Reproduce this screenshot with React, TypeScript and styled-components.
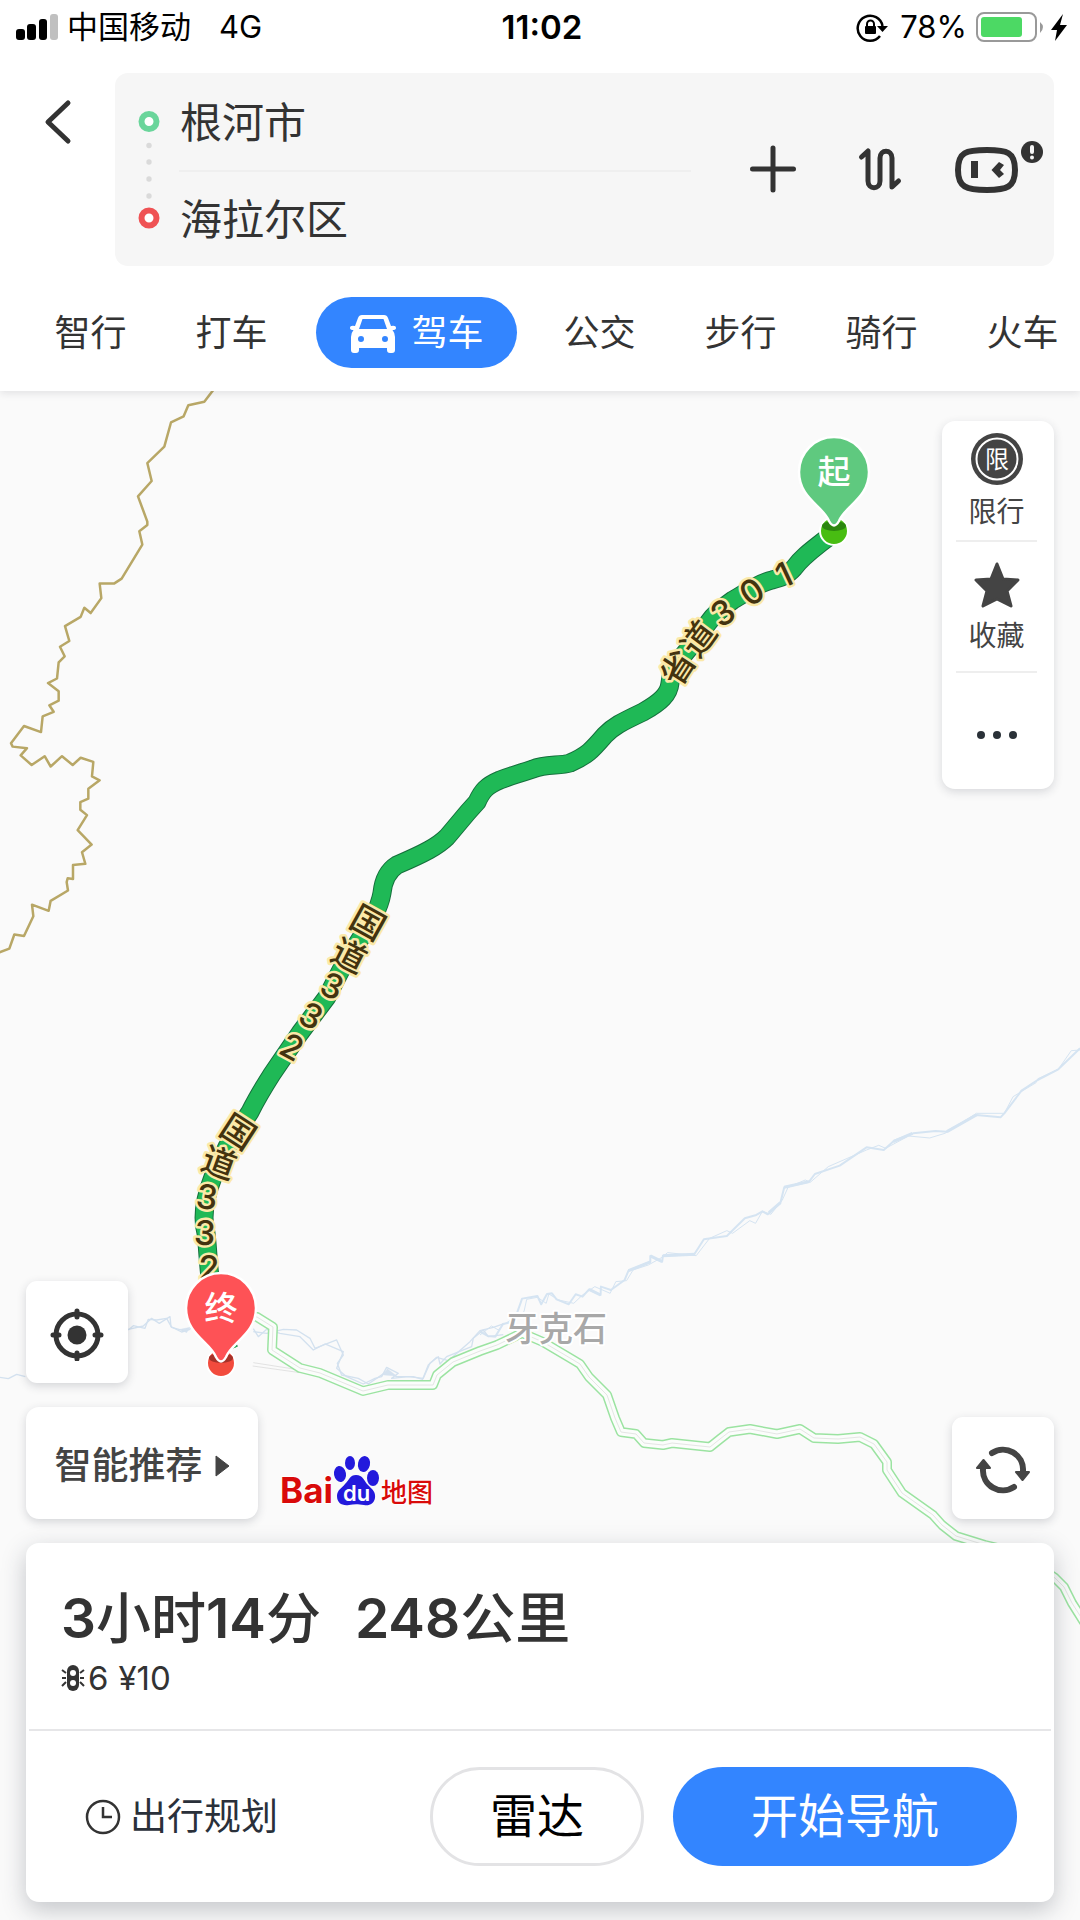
import React from "react";
import styled, { createGlobalStyle } from "styled-components";

const GlobalStyle = createGlobalStyle`
  * { box-sizing: border-box; }
  body {
    margin: 0;
    background: #fafafa;
    color: #333;
    font-family: Inter, "Noto Sans CJK SC", sans-serif;
    line-height: 1.2;
  }
  button, input { font: inherit; color: inherit; }
  svg { display: block; flex: none; }
`;

const Page = styled.div`
  display: flex;
  flex-direction: column;
  min-height: 100vh;
`;

const Header = styled.header`
  position: relative;
  z-index: 1;
  background: #fff;
  box-shadow: 0 2px 8px rgba(40, 45, 60, 0.12);
`;

const StatusBar = styled.div`
  display: grid;
  grid-template-columns: 1fr auto 1fr;
  align-items: center;
  height: 54px;
  padding: 0 12px 0 16px;
  color: #000;
  font-size: 31px;
  line-height: 36px;
`;

const StatusGroup = styled.div<{ $end?: boolean }>`
  display: flex;
  align-items: center;
  justify-content: ${(p) => (p.$end ? "flex-end" : "flex-start")};
  gap: 8px;
`;

const Network = styled.span`
  margin-left: 20px;
`;

const Clock = styled.time`
  font-size: 33px;
  font-weight: 600;
`;

const SearchRow = styled.div`
  display: flex;
  align-items: flex-start;
  padding: 19px 26px 0 0;
`;

const BackButton = styled.button`
  display: flex;
  justify-content: center;
  flex: none;
  width: 115px;
  padding: 24px 0;
  border: 0;
  background: none;
`;

const SearchBox = styled.div`
  display: flex;
  align-items: center;
  flex: 1;
  min-width: 0;
  height: 193px;
  padding: 0 10px 0 22px;
  border-radius: 13px;
  background: #f6f6f6;
`;

const Fields = styled.div`
  flex: 1;
  min-width: 0;
  margin: 0 52px 0 18px;
`;

const Field = styled.input`
  display: block;
  width: 100%;
  height: 96px;
  padding: 0 1px 4px;
  border: 0;
  background: none;
  font-size: 42px;
  outline: none;

  & + & { border-top: 2px solid #efefef; }
`;

const BoxActions = styled.div`
  display: flex;
  gap: 46px;
`;

const IconButton = styled.button`
  padding: 0;
  border: 0;
  background: none;
`;

const Tabs = styled.nav`
  display: flex;
  align-items: center;
  height: 125px;
  padding: 8px 0 0 20px;
  overflow: hidden;
`;

const Tab = styled.button<{ $active?: boolean }>`
  display: flex;
  align-items: center;
  justify-content: center;
  gap: 14px;
  flex: none;
  width: ${(p) => (p.$active ? "201px" : "141px")};
  height: 71px;
  margin: ${(p) => (p.$active ? "0 12px 0 14px" : "0")};
  padding: 2px 0 0;
  border: 0;
  border-radius: 36px;
  background: ${(p) => (p.$active ? "#3385ff" : "none")};
  color: ${(p) => (p.$active ? "#fff" : "#333")};
  font-size: 36px;
`;

const MapArea = styled.main`
  position: relative;
  display: flex;
  flex: 1;
  flex-direction: column;
  justify-content: space-between;
  padding: 30px 26px 18px;
  background: #fafafa;
`;

const MapCanvas = styled.svg`
  position: absolute;
  inset: 0;
  width: 100%;
  height: 100%;
`;

const Panel = styled.div`
  position: relative;
  align-self: flex-end;
  width: 112px;
  padding: 11px 17px 0 14px;
  border-radius: 13px;
  background: #fff;
  box-shadow: 0 3px 10px rgba(40, 45, 60, 0.16);
`;

const PanelButton = styled.button<{ $height: number }>`
  display: flex;
  flex-direction: column;
  align-items: center;
  gap: 8px;
  width: 100%;
  height: ${(p) => p.$height}px;
  padding: 0;
  border: 0;
  background: none;
  color: #444;
  font-size: 28px;
  line-height: 36px;

  & + & {
    justify-content: center;
    border-top: 2px solid #eee;
  }
`;

const BottomStack = styled.div`
  position: relative;
  display: flex;
  flex-direction: column;
  gap: 24px;
`;

const FloatButton = styled.button`
  display: flex;
  align-items: center;
  justify-content: center;
  width: 102px;
  height: 102px;
  padding: 3px 0 0;
  border: 0;
  border-radius: 11px;
  background: #fff;
  box-shadow: 0 3px 10px rgba(40, 45, 60, 0.18);
`;

const ToolRow = styled.div`
  display: flex;
  align-items: flex-end;
  gap: 20px;
`;

const SmartButton = styled(FloatButton)`
  gap: 12px;
  width: 232px;
  height: 112px;
  padding-top: 6px;
  border-radius: 13px;
  color: #444;
  font-size: 37px;
  font-weight: 500;
`;

const Logo = styled.svg`
  margin-bottom: 4px;
`;

const RefreshButton = styled(FloatButton)`
  margin-left: auto;
`;

const Card = styled.section`
  border-radius: 13px;
  background: #fff;
  box-shadow: 0 8px 24px rgba(40, 45, 60, 0.26);
`;

const Summary = styled.div`
  height: 188px;
  margin: 0 3px;
  padding: 43px 31px 0 32px;
  border-bottom: 2px solid #e6e6e8;
`;

const Headline = styled.h1`
  display: flex;
  gap: 34px;
  margin: 0;
  font-size: 55px;
  font-weight: 500;
  line-height: 64px;
`;

const Figure = styled.span`
  font-weight: 600;
`;

const Details = styled.p`
  display: flex;
  align-items: center;
  gap: 10px;
  margin: 8px 0 0;
  font-size: 33px;
  line-height: 40px;
`;

const Detail = styled.span`
  display: flex;
  align-items: center;
  gap: 3px;
`;

const Actions = styled.div`
  display: flex;
  align-items: center;
  height: 171px;
  padding: 0 37px 0 59px;
`;

const PlanButton = styled.button`
  display: flex;
  align-items: center;
  gap: 9px;
  margin-right: auto;
  padding: 2px 0 0;
  border: 0;
  background: none;
  color: #2a303a;
  font-size: 37px;
`;

const PillButton = styled.button<{ $primary?: boolean }>`
  width: ${(p) => (p.$primary ? "344px" : "214px")};
  height: 99px;
  margin-left: ${(p) => (p.$primary ? "29px" : "0")};
  padding: 0;
  border: ${(p) => (p.$primary ? "0" : "3px solid #e3e3e5")};
  border-radius: 50px;
  background: ${(p) => (p.$primary ? "#3385ff" : "#fff")};
  color: ${(p) => (p.$primary ? "#fff" : "#000")};
  font-size: 47px;
`;

const RoadGlyph = styled.text`
  fill: #43330f;
  stroke: #fbe9a8;
  stroke-width: 5px;
  stroke-linejoin: round;
  paint-order: stroke;
  font-size: 34px;
  font-weight: 500;
  text-anchor: middle;
`;

const PlaceName = styled.text`
  fill: #a8a8a8;
  stroke: #fff;
  stroke-width: 4px;
  stroke-linejoin: round;
  paint-order: stroke;
  font-size: 34px;
  font-weight: 500;
`;

const PinText = styled.text`
  fill: #fff;
  font-size: 33px;
  font-weight: 500;
  text-anchor: middle;
`;

const BORDER =
  "640,26 613,57 565,66 551,95 513,111 493,174 442,217 455,264 414,304 442,370 442,379 418,395 427,430 365,519 342,532 299,532 304,570 272,609 253,595 242,619 195,643 208,682 180,697 194,722 176,738 171,780 144,792 176,813 176,838 148,850 161,867 128,879 123,920 72,904 33,949 38,958 81,962 62,981 95,1006 134,983 152,1010 186,983 218,1006 242,987 280,998 276,1036 299,1046 265,1068 265,1094 241,1103 241,1123 261,1137 233,1176 275,1214 246,1234 256,1264 219,1267 219,1304 203,1302 200,1312 204,1334 152,1361 146,1387 96,1371 100,1401 72,1453 43,1449 28,1486 -3,1496";

const RIVER_EAST =
  "1568,85 1511,148 1457,180 1415,212 1370,280 1360,292 1297,285 1220,335 1190,333 1132,340 1082,362 1055,390 1010,382 940,437 875,462 860,485 795,502 785,548 752,583 738,574 722,585 692,595 645,648 585,658 560,703 478,707 476,725 445,708 445,726 388,752 378,780 342,810 316,800 315,825 285,808 268,830 250,823 232,853 200,838 188,820 175,822 160,853 150,828 110,836 98,875 90,905 60,912 40,950 20,948 0,935";

const RIVER_EAST_BANK =
  "1568,90 1545,92 1511,148 1458,176 1453,188 1393,230 1370,280 1297,280 1215,340 1175,354 1120,348 1060,385 1042,376 1010,390 910,440 863,487 850,480 805,502 790,540 760,583 738,574 720,610 705,602 660,640 645,632 600,655 565,707 490,698 476,712 440,735 400,750 383,782 355,785 340,820 300,800 268,825 245,850 205,840 180,822 173,850 150,832 122,838 115,875 60,915 48,930 30,918 0,945";

const RIVER_WEST = [
  "0,412 25,416 50,403 76,410",
  "385,270 400,257 435,265 445,238 470,240 500,235 515,262 550,272 575,265",
  "385,268 430,258 455,235 478,250 510,230 513,260 545,276 570,268",
  "760,266 775,290 800,268 840,280 900,290 940,330 975,312 1030,335 1010,385 1040,410 1090,432 1125,415 1145,410 1160,382 1195,400 1175,415 1225,410 1270,415 1290,370 1315,350 1320,372 1340,350 1415,320 1420,295 1450,270 1465,290 1510,284",
  "760,275 800,280 850,268 890,270 930,295 945,325 1010,300 1030,345 1012,370 1025,405 1075,415 1105,432 1160,395 1190,410 1240,410 1268,418 1285,375 1310,352 1345,362 1410,305 1440,272 1480,262 1510,252",
];

const HIGHWAY =
  "250,1316 257,1317 273,1327 272,1350 300,1368 320,1373 363,1391 388,1385 433,1385 437,1375 453,1362 480,1351 497,1345 522,1333 543,1342 570,1358 580,1364 589,1377 607,1395 615,1418 621,1432 636,1434 644,1443 663,1445 672,1443 710,1447 720,1439 729,1432 750,1429 777,1434 800,1429 814,1438 838,1439 860,1437 874,1444 887,1462 887,1470 902,1493 933,1515 942,1525 956,1536 985,1545 1018,1553 1055,1578 1064,1587 1072,1603 1084,1622";

const ROUTE =
  "M833 533 L826 539 C812 550 802 557 794 568 C787 576 780 578 772 580 C758 583 746 593 733 600 C722 608 714 614 708 623 L692 645 C682 656 671 670 670 683 C669 694 661 702 643 712 C620 723 614 726 605 735 C592 750 588 755 570 763 C560 766 545 764 533 769 C515 775 510 776 500 780 C486 786 482 791 477 802 L468 812 L447 837 C438 846 425 853 397 865 C386 872 383 883 382 893 C380 905 376 912 372 920 L342 968 L327 997 L300 1033 L272 1074 Q258 1096 250 1112 L227 1147 L213 1177 C206 1195 201 1215 206 1233 C208 1250 208 1262 210 1277 L225 1340 L229 1350";

const ROAD_GLYPHS: [string, number, number, number][] = [
  ["省", 678, 668, -57],
  ["道", 699, 639, -53],
  ["3", 723, 613, -33],
  ["0", 752, 592, -33],
  ["1", 784, 575, -25],
  ["国", 368, 923, 29],
  ["道", 349, 956, 27],
  ["3", 332, 986, 24],
  ["3", 311, 1016, 28],
  ["2", 292, 1047, 28],
  ["国", 238, 1132, 33],
  ["道", 219, 1163, 20],
  ["3", 207, 1197, 8],
  ["3", 205, 1233, 5],
  ["2", 209, 1268, 0],
];

type PinProps = { x: number; y: number; drop: number; label: string; fill: string; ball: string; hole: string };

function Pin({ x, y, drop, label, fill, ball, hole }: PinProps) {
  return (
    <g transform={`translate(${x} ${y})`}>
      <circle cx="0" cy={drop} r="14" fill={ball} stroke="#fff" strokeWidth="2" />
      <ellipse cx="0" cy={drop - 5} rx="12" ry="5" fill={hole} />
      <path
        d="M0 -35 A35 35 0 0 1 35 0 C35 26 11 34 5 49 Q0 58 -5 49 C-11 34 -35 26 -35 0 A35 35 0 0 1 0 -35Z"
        fill={fill}
        stroke="#fff"
        strokeWidth="2.5"
      />
      <PinText y="12">{label}</PinText>
    </g>
  );
}

function MapDrawing() {
  return (
    <MapCanvas viewBox="0 391 1080 1529" preserveAspectRatio="xMidYMin slice" role="img" aria-label="路线地图">
      <g fill="none" strokeLinejoin="round">
        <g transform="translate(0 380) scale(0.3333 0.3827)">
          <polyline points={BORDER} stroke="#b8a766" strokeWidth="2.5" vectorEffect="non-scaling-stroke" />
        </g>
        <g transform="translate(480 1020) scale(0.3827 0.3333)" stroke="#d5e4f2">
          <polyline points={RIVER_EAST} strokeWidth="2" vectorEffect="non-scaling-stroke" />
          <polyline points={RIVER_EAST_BANK} strokeWidth="1" vectorEffect="non-scaling-stroke" />
          <path
            d="M1220 335L1297 285M1130 340L1080 365M860 485L795 502M785 548L755 578M562 703L478 707M445 726L388 752M315 825L285 808M476 725L445 708"
            strokeWidth="3"
            vectorEffect="non-scaling-stroke"
          />
        </g>
        <g transform="translate(0 1240) scale(0.3333)" stroke="#d3e1ef">
          {RIVER_WEST.map((points) => (
            <polyline key={points} points={points} strokeWidth="4" />
          ))}
          <path d="M760 368L900 390L980 402M758 378L900 398" stroke="#e2e2e2" strokeWidth="3" />
          <path d="M1150 405L1162 386L1190 408ZM540 268L570 262L560 278Z" fill="#d5e2ef" />
        </g>
        <polyline points={HIGHWAY} stroke="#9be3a1" strokeWidth="10" />
        <polyline points={HIGHWAY} stroke="#fbfdfb" strokeWidth="7" />
        <polyline points={HIGHWAY} stroke="#e4e6e4" strokeWidth="1" />
        <path d={ROUTE} stroke="#156f3c" strokeWidth="19" />
        <path d={ROUTE} stroke="#1fb956" strokeWidth="17" />
      </g>
      <PlaceName x="505" y="1341">牙克石</PlaceName>
      {ROAD_GLYPHS.map(([glyph, x, y, angle]) => (
        <RoadGlyph key={`${x}-${y}`} transform={`translate(${x} ${y}) rotate(${angle})`} y="12">
          {glyph}
        </RoadGlyph>
      ))}
      <Pin x={834} y={472} drop={59} label="起" fill="#5fc97f" ball="#48bd12" hole="#2b860f" />
      <Pin x={221} y={1308} drop={55} label="终" fill="#fe5256" ball="#f24b3d" hole="#a63229" />
    </MapCanvas>
  );
}

function BaiduLogo() {
  return (
    <Logo width="158" height="64" viewBox="278 1450 158 64" role="img" aria-label="Baidu 地图">
      <g fill="#d90a0a" stroke="#fff" strokeWidth="2" paintOrder="stroke">
        <text x="280" y="1502" fontSize="35" fontWeight="700">Bai</text>
        <text x="381" y="1501" fontSize="26" fontWeight="500">地图</text>
      </g>
      <g fill="#2319dc">
        <ellipse cx="340" cy="1473" rx="6" ry="8" transform="rotate(-10 340 1473)" />
        <ellipse cx="350" cy="1462" rx="5" ry="7" />
        <ellipse cx="364" cy="1463" rx="6" ry="8" transform="rotate(12 364 1463)" />
        <ellipse cx="373" cy="1477" rx="6" ry="8" />
        <path d="M356 1474c7 0 8 6 12 10 4 4 8 7 7 13-1 6-6 8-11 7-6-1-10-1-15 0-7 1-12-2-12-9 0-6 5-8 8-12 4-4 5-9 11-9z" />
      </g>
      <text x="343" y="1500" fill="#fff" fontSize="22" fontWeight="600">du</text>
    </Logo>
  );
}

export default function App() {
  return (
    <Page>
      <GlobalStyle />
      <Header>
        <StatusBar>
          <StatusGroup>
            <svg width="43" height="28" viewBox="0 0 43 28">
              <rect x="0" y="16" width="9" height="11" rx="3" />
              <rect x="11" y="11" width="9" height="16" rx="3" />
              <rect x="23" y="6" width="8" height="21" rx="3" />
              <rect x="34" y="1" width="8" height="26" rx="3" fill="#c0c0c0" />
            </svg>
            <span>中国移动</span>
            <Network>4G</Network>
          </StatusGroup>
          <Clock>11:02</Clock>
          <StatusGroup $end>
            <svg width="36" height="30" viewBox="856 11 36 30" fill="none" stroke="#000" strokeWidth="2.5">
              <path d="M880 35A12.500 12.500 0 1 1 882.500 25" />
              <path d="M877 25H888L882.500 31Z" fill="#000" stroke="none" />
              <rect x="865" y="25" width="11" height="8" rx="1" fill="#000" stroke="none" />
              <path d="M867 26V23a3.500 3.500 0 0 1 7 0V26" strokeWidth="2" />
            </svg>
            <span>78%</span>
            <svg width="93" height="30" viewBox="975 11 93 30">
              <rect x="977" y="12" width="59" height="28" rx="7" fill="none" stroke="#999" strokeWidth="2" />
              <rect x="981" y="16" width="41" height="20" rx="3" fill="#4cd964" />
              <path d="M1040 21q6 5 0 11z" fill="#999" />
              <path d="M1063 13L1051 29H1057L1055 40L1067 24H1060Z" />
            </svg>
          </StatusGroup>
        </StatusBar>
        <SearchRow>
          <BackButton aria-label="返回">
            <svg width="30" height="48" viewBox="0 0 30 48" fill="none" stroke="#333" strokeWidth="5" strokeLinecap="round" strokeLinejoin="round">
              <path d="M25 6L5 25L25 44" />
            </svg>
          </BackButton>
          <SearchBox>
            <svg width="24" height="120" viewBox="137 110 24 120">
              <circle cx="149" cy="121.500" r="7.500" fill="#fff" stroke="#6ad59b" strokeWidth="6" />
              <circle cx="149" cy="218" r="7.500" fill="#fff" stroke="#ef5254" strokeWidth="6" />
              <g fill="#dadada">
                <circle cx="149" cy="145.500" r="2.700" />
                <circle cx="149" cy="162" r="2.700" />
                <circle cx="149" cy="179" r="2.700" />
                <circle cx="149" cy="196" r="2.700" />
              </g>
            </svg>
            <Fields>
              <Field aria-label="起点" defaultValue="根河市" />
              <Field aria-label="终点" defaultValue="海拉尔区" />
            </Fields>
            <BoxActions>
              <IconButton aria-label="添加途经点">
                <svg width="60" height="60" viewBox="743 140 60 60" stroke="#333" strokeWidth="5" strokeLinecap="round">
                  <path d="M773 148V190M752.500 169H793.500" />
                </svg>
              </IconButton>
              <IconButton aria-label="交换起终点">
                <svg width="60" height="60" viewBox="849 140 60 60" fill="none" stroke="#333" strokeWidth="5" strokeLinecap="round" strokeLinejoin="round">
                  <path d="M861.500 157L868 151V181C868 190 880 190 880 181V158C880 149 892 149 892 158V187L898.500 181" />
                </svg>
              </IconButton>
              <IconButton aria-label="语音助手">
                <svg width="89" height="60" viewBox="955 140 89 60">
                  <path d="M987 150C1007 150 1015 152 1015 170C1015 187 1007 190 987 190C966 190 958 187 958 170C958 152 966 150 987 150Z" fill="none" stroke="#333" strokeWidth="6" />
                  <rect x="971" y="161" width="7" height="17" fill="#333" />
                  <path d="M991.500 170L999 162L1004 165L1000 170L1004 174L999 178Z" fill="#333" />
                  <circle cx="1032" cy="152" r="11" fill="#333" />
                  <path d="M1032 147V152" stroke="#f6f6f6" strokeWidth="4" strokeLinecap="round" />
                  <circle cx="1032" cy="157.500" r="2" fill="#f6f6f6" />
                </svg>
              </IconButton>
            </BoxActions>
          </SearchBox>
        </SearchRow>
        <Tabs>
          <Tab>智行</Tab>
          <Tab>打车</Tab>
          <Tab $active>
            <svg width="48" height="40" viewBox="0 0 48 40" fill="#fff">
              <path
                fillRule="evenodd"
                d="M13 1H35Q38 1 39 4L42 12Q47 11 47 14Q47 16 43.500 16Q46 19 46 23V36Q46 39 43 39H41Q38 39 38 36V34H10V36Q10 39 7 39H5Q2 39 2 36V23Q2 19 4.500 16Q1 16 1 14Q1 11 6 12L9 4Q10 1 13 1ZM13.500 5L10 15H38L34.500 5ZM12 22a3 3 0 1 0 0 6a3 3 0 1 0 0 -6ZM36 22a3 3 0 1 0 0 6a3 3 0 1 0 0 -6Z"
              />
            </svg>
            驾车
          </Tab>
          <Tab>公交</Tab>
          <Tab>步行</Tab>
          <Tab>骑行</Tab>
          <Tab>火车</Tab>
        </Tabs>
      </Header>

      <MapArea>
        <MapDrawing />
        <Panel>
          <PanelButton $height={108}>
            <svg width="54" height="54" viewBox="0 0 54 54">
              <circle cx="27" cy="27" r="26" fill="#444" />
              <circle cx="27" cy="27" r="20.500" fill="none" stroke="#fff" strokeWidth="2" />
              <text x="27" y="36" fontSize="24" fill="#fff" textAnchor="middle">限</text>
            </svg>
            限行
          </PanelButton>
          <PanelButton $height={131}>
            <svg width="46" height="50" viewBox="0 0 46 50">
              <path d="M23 4L29 19L44 20L33 31L37 46L23 39L9 46L13 31L2 20L17 19Z" fill="#444" stroke="#444" strokeWidth="3" strokeLinejoin="round" />
            </svg>
            收藏
          </PanelButton>
          <PanelButton $height={118} aria-label="更多">
            <svg width="46" height="24" viewBox="0 0 46 24" fill="#2a3138">
              <circle cx="7" cy="16" r="4" />
              <circle cx="23" cy="16" r="4" />
              <circle cx="39" cy="16" r="4" />
            </svg>
          </PanelButton>
        </Panel>

        <BottomStack>
          <FloatButton aria-label="定位">
            <svg width="54" height="54" viewBox="0 0 54 54">
              <circle cx="27" cy="28" r="21" fill="none" stroke="#333" strokeWidth="5" />
              <circle cx="27" cy="28" r="9.500" fill="#333" />
              <path d="M27 4V10M27 46V52M3 28H9M45 28H51" stroke="#333" strokeWidth="5" strokeLinecap="round" />
            </svg>
          </FloatButton>
          <ToolRow>
            <SmartButton>
              智能推荐
              <svg width="15" height="22" viewBox="0 0 15 22" fill="#444">
                <path d="M1 1L14 11L1 21Z" stroke="#444" strokeLinejoin="round" />
              </svg>
            </SmartButton>
            <BaiduLogo />
            <RefreshButton aria-label="刷新">
              <svg width="54" height="54" viewBox="0 0 54 54" fill="none" stroke="#444" strokeWidth="6" strokeLinecap="round">
                <path d="M16 10A20 20 0 0 1 47 28" />
                <path d="M38 44A20 20 0 0 1 7 26" />
                <g fill="#444" strokeWidth="2" strokeLinejoin="round">
                  <path d="M40 29H53L46.500 37Z" />
                  <path d="M1 25H14L7.500 17Z" />
                </g>
              </svg>
            </RefreshButton>
          </ToolRow>
          <Card>
            <Summary>
              <Headline>
                <span>
                  <Figure>3</Figure>小时<Figure>14</Figure>分
                </span>
                <span>
                  <Figure>248</Figure>公里
                </span>
              </Headline>
              <Details>
                <Detail>
                  <svg width="24" height="26" viewBox="0 0 24 26">
                    <path d="M1 5L5 8M1 13H5M1 21L5 17M23 5L19 8M23 13H19M23 21L19 17" stroke="#333" strokeWidth="2" />
                    <rect x="6" y="0" width="12" height="26" rx="6" fill="#333" />
                    <circle cx="12" cy="8" r="3" fill="#fff" />
                    <circle cx="12" cy="18" r="3" fill="#fff" />
                  </svg>
                  6
                </Detail>
                <span>¥10</span>
              </Details>
            </Summary>
            <Actions>
              <PlanButton>
                <svg width="36" height="36" viewBox="0 0 36 36" fill="none" stroke="#333" strokeWidth="2.5">
                  <circle cx="18" cy="18" r="16" />
                  <path d="M18 8V18H27" />
                </svg>
                出行规划
              </PlanButton>
              <PillButton>雷达</PillButton>
              <PillButton $primary>开始导航</PillButton>
            </Actions>
          </Card>
        </BottomStack>
      </MapArea>
    </Page>
  );
}
